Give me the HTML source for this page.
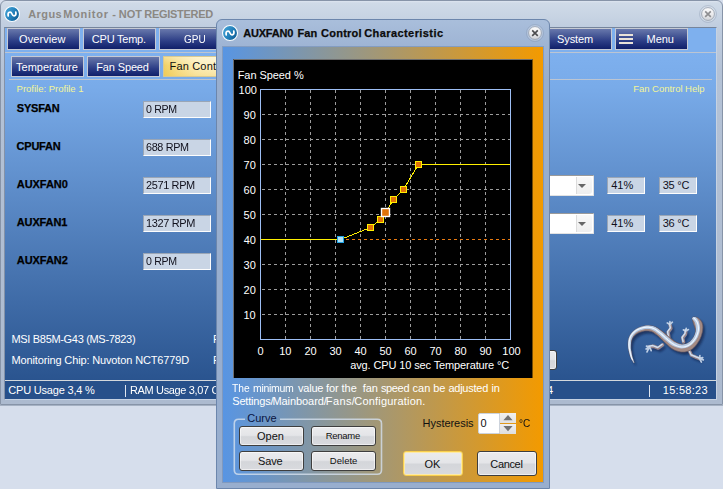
<!DOCTYPE html>
<html><head><meta charset="utf-8"><title>Argus Monitor</title>
<style>
html,body{margin:0;padding:0}
body{width:723px;height:489px;position:relative;overflow:hidden;background:#d6deec;font-family:'Liberation Sans', sans-serif;font-size:11px}
div,span,svg,i,b{position:absolute;box-sizing:content-box}
.t{white-space:nowrap;display:block}
#main{left:0;top:0;width:721px;height:403px;border:1px solid #8794a8;border-radius:6px 6px 0 0;box-shadow:0 1px 0 rgba(125,140,162,.55);background:linear-gradient(to bottom,#dde5ef 0,#cfdae7 2px,#c9d5e4 13px,#c0cddf 26px,#b4c2d6 70px,#acbacf 100%)}
#mc{left:5px;top:28px;width:711px;height:371px;background:linear-gradient(to bottom,#7eb0ee 0,#7eb0ee 25px,#79abe9 59px,#2a548f 352px,#27508a 371px);overflow:hidden}
.nb{border:1px solid #c6cad4;background:linear-gradient(to bottom,#6878ac 0,#4a5b98 30%,#2c3d86 60%,#101f6a 100%)}
.nb.sel{border-color:#d8c992;background:linear-gradient(to bottom,rgba(255,255,255,.3) 0,rgba(255,255,255,0) 45%,rgba(236,190,60,.28) 100%),linear-gradient(to right,#f1d063 0,#f7df8c 18%,#fceeb8 45%,#fdf2c8 75%,#fdf0c4 100%)}
.hl{height:1px;background:#bcc5d2}
.vb{background:#c9d5e5;border:1px solid;border-color:#9aa6b6 #fdfdfd #fdfdfd #9aa6b6}
.cb{background:#fff;border:1px solid #e2e2e2;border-top-color:#9a9a9a;border-radius:1px}
.cb i{right:1px;top:1px;width:15px;height:17px;background:linear-gradient(#f8f8f8,#eeeeee);border-left:1px solid #dcdcdc;border-radius:0 3px 3px 0}
.cb b{right:6.6px;top:7.8px;width:0;height:0;border:4.1px solid transparent;border-top:4.4px solid #666;border-bottom:0}
.vs{width:1px;background:#dfe6f0}
#dlg{left:216px;top:19px;width:332px;height:468px;border:1px solid #6c86ac;border-radius:6px 6px 0 0;background:linear-gradient(to bottom,#a9bedb 0,#9eb4d4 27px,#98aece 60px,#98aece 100%)}
#dc{left:223px;top:47px;width:320px;height:435px;box-shadow:0 0 0 1px rgba(110,136,176,.55);background:linear-gradient(to right,#5895e3 0,#f39a00 100%)}
.wb{border:1px solid #3e3e3e;border-radius:3px;background:linear-gradient(to bottom,#ebebed 0,#e4e5e8 46%,#d4d6da 54%,#d9dade 100%);box-shadow:inset 0 0 0 1px rgba(255,255,255,.55)}
.gb{border:1px solid rgba(215,222,230,.85);border-radius:4px}
.ico{display:block}
</style></head><body>
<div id="main"></div>
<div style="left:4px;top:27px;width:711px;height:371px;border:1px solid;border-color:#76859c #c6d2e2 #c6d2e2 #8492a8"></div>
<div id="mc"></div>
<div class="hl" style="left:5px;top:52px;width:711px"></div>
<div class="hl" style="left:9px;top:79px;width:703px"></div>
<div class="hl" style="left:5px;top:380px;width:711px;background:#d4d8dc"></div>
<div style="left:5px;top:381px;width:711px;height:18px;background:#27508a"></div>
<div class="vs" style="left:125px;top:385px;height:12px"></div>
<div class="vs" style="left:649px;top:385px;height:12px"></div>
<div class="nb" style="left:7px;top:28px;width:71px;height:20px"></div>
<div class="nb" style="left:83px;top:28px;width:71px;height:20px"></div>
<div class="nb" style="left:159px;top:28px;width:71px;height:20px"></div>
<div class="nb" style="left:235px;top:28px;width:71px;height:20px"></div>
<div class="nb" style="left:311px;top:28px;width:71px;height:20px"></div>
<div class="nb" style="left:387px;top:28px;width:71px;height:20px"></div>
<div class="nb" style="left:463px;top:28px;width:71px;height:20px"></div>
<div class="nb" style="left:539px;top:28px;width:71px;height:20px"></div>
<div class="nb" style="left:615px;top:28px;width:71px;height:20px"></div>
<div class="nb" style="left:11px;top:56px;width:71px;height:19px"></div>
<div class="nb" style="left:87px;top:56px;width:71px;height:19px"></div>
<div class="nb sel" style="left:163px;top:56px;width:71px;height:19px"></div>
<div style="left:619px;top:34px;width:14px;height:2px;background:#e9e2d8;box-shadow:0 4px 0 #e9e2d8,0 8px 0 #e9e2d8"></div>
<div class="vb" style="left:143px;top:101px;width:66px;height:15px"></div>
<div class="vb" style="left:143px;top:139px;width:66px;height:15px"></div>
<div class="vb" style="left:143px;top:177px;width:66px;height:15px"></div>
<div class="vb" style="left:143px;top:215px;width:66px;height:15px"></div>
<div class="vb" style="left:143px;top:253px;width:66px;height:15px"></div>
<div class="vb" style="left:607px;top:177px;width:36px;height:15px"></div>
<div class="vb" style="left:659px;top:177px;width:36px;height:15px"></div>
<div class="vb" style="left:607px;top:215px;width:36px;height:15px"></div>
<div class="vb" style="left:659px;top:215px;width:36px;height:15px"></div>
<div class="cb" style="left:500px;top:175px;width:92px;height:19px"><i></i><b></b></div>
<div class="cb" style="left:500px;top:213px;width:92px;height:19px"><i></i><b></b></div>
<div class="wb" style="left:520px;top:350px;width:35px;height:18px"></div>
<svg style="left:620px;top:306px" width="97" height="68" viewBox="620 306 97 68">
<defs><clipPath id="gc"><path d="M634.3 362.5 L634.0 361.8 L633.6 360.8 L633.2 359.6 L632.7 358.3 L632.3 356.7 L631.9 354.9 L631.5 352.7 L631.1 350.4 L630.8 348.1 L630.8 346.1 L630.9 344.3 L631.1 342.6 L631.4 341.0 L631.9 339.6 L632.5 338.3 L633.3 337.1 L634.2 336.0 L635.3 335.0 L636.4 334.1 L637.7 333.3 L639.1 332.6 L640.8 332.0 L642.5 331.5 L644.2 331.1 L645.8 330.9 L647.2 330.9 L648.5 331.0 L649.8 331.2 L651.1 331.5 L652.3 331.9 L653.5 332.6 L654.7 333.4 L656.0 334.4 L657.4 335.5 L658.7 336.6 L659.9 337.7 L661.1 338.8 L662.3 340.1 L663.7 341.4 L665.0 342.7 L666.4 344.0 L667.8 345.3 L669.3 346.7 L671.0 348.1 L672.9 349.2 L674.8 350.2 L676.7 350.9 L678.7 351.5 L680.8 352.0 L682.9 352.1 L685.0 352.0 L687.0 351.5 L688.9 350.9 L690.6 350.0 L692.3 349.0 L693.8 347.7 L695.2 346.3 L696.5 344.7 L697.6 343.1 L698.6 341.6 L699.6 339.9 L700.4 338.2 L701.1 336.4 L701.7 334.6 L702.2 332.8 L702.6 330.9 L702.8 329.1 L702.9 327.3 L702.8 325.7 L702.5 324.1 L702.0 322.5 L701.2 321.1 L700.4 319.9 L699.5 319.0 L698.5 318.2 L697.3 317.5 L696.0 317.2 L694.7 317.0 L693.7 317.0 L693.1 317.0 L692.0 318.4 L692.2 319.1 L692.5 320.0 L692.8 321.0 L693.0 321.9 L693.2 322.7 L693.4 323.5 L693.7 324.3 L694.0 325.0 L694.2 325.6 L694.5 326.3 L694.7 327.2 L695.1 328.2 L695.3 329.3 L695.5 330.5 L695.5 331.6 L695.3 332.8 L694.9 334.1 L694.4 335.5 L693.8 336.8 L693.0 338.1 L692.2 339.2 L691.2 340.3 L690.2 341.4 L689.2 342.2 L688.2 342.8 L687.2 343.4 L686.1 343.8 L685.1 344.1 L684.0 344.3 L683.0 344.3 L681.9 344.2 L680.7 343.9 L679.3 343.5 L677.9 343.0 L676.6 342.4 L675.3 341.7 L674.0 340.8 L672.6 339.7 L671.1 338.6 L669.6 337.4 L668.3 336.3 L667.0 335.2 L665.6 334.0 L664.2 332.8 L662.7 331.6 L661.2 330.5 L659.7 329.4 L658.0 328.3 L656.2 327.3 L654.4 326.5 L652.5 326.0 L650.7 325.7 L648.9 325.5 L647.0 325.6 L645.1 325.8 L643.1 326.2 L641.1 326.8 L639.1 327.6 L637.1 328.5 L635.4 329.5 L633.8 330.7 L632.5 332.1 L631.2 333.5 L630.2 335.1 L629.4 336.8 L628.7 338.5 L628.3 340.3 L628.1 342.2 L628.0 344.2 L628.1 346.2 L628.3 348.4 L628.8 350.8 L629.4 353.2 L630.0 355.4 L630.6 357.2 L631.2 358.8 L632.0 360.2 L632.7 361.3 L633.3 362.2 L633.7 362.9Z"/></clipPath>
<filter id="gb" x="-20%" y="-20%" width="140%" height="140%"><feGaussianBlur stdDeviation="1.2"/></filter></defs>
<g transform="translate(2,2.6)" opacity=".6" filter="url(#gb)"><path d="M634.3 362.5 L634.0 361.8 L633.6 360.8 L633.2 359.6 L632.7 358.3 L632.3 356.7 L631.9 354.9 L631.5 352.7 L631.1 350.4 L630.8 348.1 L630.8 346.1 L630.9 344.3 L631.1 342.6 L631.4 341.0 L631.9 339.6 L632.5 338.3 L633.3 337.1 L634.2 336.0 L635.3 335.0 L636.4 334.1 L637.7 333.3 L639.1 332.6 L640.8 332.0 L642.5 331.5 L644.2 331.1 L645.8 330.9 L647.2 330.9 L648.5 331.0 L649.8 331.2 L651.1 331.5 L652.3 331.9 L653.5 332.6 L654.7 333.4 L656.0 334.4 L657.4 335.5 L658.7 336.6 L659.9 337.7 L661.1 338.8 L662.3 340.1 L663.7 341.4 L665.0 342.7 L666.4 344.0 L667.8 345.3 L669.3 346.7 L671.0 348.1 L672.9 349.2 L674.8 350.2 L676.7 350.9 L678.7 351.5 L680.8 352.0 L682.9 352.1 L685.0 352.0 L687.0 351.5 L688.9 350.9 L690.6 350.0 L692.3 349.0 L693.8 347.7 L695.2 346.3 L696.5 344.7 L697.6 343.1 L698.6 341.6 L699.6 339.9 L700.4 338.2 L701.1 336.4 L701.7 334.6 L702.2 332.8 L702.6 330.9 L702.8 329.1 L702.9 327.3 L702.8 325.7 L702.5 324.1 L702.0 322.5 L701.2 321.1 L700.4 319.9 L699.5 319.0 L698.5 318.2 L697.3 317.5 L696.0 317.2 L694.7 317.0 L693.7 317.0 L693.1 317.0 L692.0 318.4 L692.2 319.1 L692.5 320.0 L692.8 321.0 L693.0 321.9 L693.2 322.7 L693.4 323.5 L693.7 324.3 L694.0 325.0 L694.2 325.6 L694.5 326.3 L694.7 327.2 L695.1 328.2 L695.3 329.3 L695.5 330.5 L695.5 331.6 L695.3 332.8 L694.9 334.1 L694.4 335.5 L693.8 336.8 L693.0 338.1 L692.2 339.2 L691.2 340.3 L690.2 341.4 L689.2 342.2 L688.2 342.8 L687.2 343.4 L686.1 343.8 L685.1 344.1 L684.0 344.3 L683.0 344.3 L681.9 344.2 L680.7 343.9 L679.3 343.5 L677.9 343.0 L676.6 342.4 L675.3 341.7 L674.0 340.8 L672.6 339.7 L671.1 338.6 L669.6 337.4 L668.3 336.3 L667.0 335.2 L665.6 334.0 L664.2 332.8 L662.7 331.6 L661.2 330.5 L659.7 329.4 L658.0 328.3 L656.2 327.3 L654.4 326.5 L652.5 326.0 L650.7 325.7 L648.9 325.5 L647.0 325.6 L645.1 325.8 L643.1 326.2 L641.1 326.8 L639.1 327.6 L637.1 328.5 L635.4 329.5 L633.8 330.7 L632.5 332.1 L631.2 333.5 L630.2 335.1 L629.4 336.8 L628.7 338.5 L628.3 340.3 L628.1 342.2 L628.0 344.2 L628.1 346.2 L628.3 348.4 L628.8 350.8 L629.4 353.2 L630.0 355.4 L630.6 357.2 L631.2 358.8 L632.0 360.2 L632.7 361.3 L633.3 362.2 L633.7 362.9Z" fill="#08193a"/><path d="M669.0 337.9 L668.1 332.2 L670.9 328.4 L669.9 324.3 M683.6 342.1 L682.6 337.9 L685.5 334.1 L685.9 330.9 M662.6 344.9 L658.2 348.1 L653.3 346.2 L649.5 346.8 M689.3 350.6 L691.5 355.3 L696.3 357.4 L699.5 358.6" fill="none" stroke="#08193a" stroke-width="2.4" stroke-linecap="round" stroke-linejoin="round"/></g>
<path d="M669.0 337.9 L668.1 332.2 L670.9 328.4 L669.9 324.3 M683.6 342.1 L682.6 337.9 L685.5 334.1 L685.9 330.9 M662.6 344.9 L658.2 348.1 L653.3 346.2 L649.5 346.8 M689.3 350.6 L691.5 355.3 L696.3 357.4 L699.5 358.6" fill="none" stroke="#98858a" stroke-width="3.4" stroke-linecap="round" stroke-linejoin="round"/>
<path d="M669.9 324.3 L667.3 323.0 M669.9 324.3 L669.9 321.7 M669.9 324.3 L672.4 322.2 M685.9 330.9 L683.4 329.9 M685.9 330.9 L686.2 328.4 M685.9 330.9 L688.4 329.6 M649.5 346.8 L646.5 346.2 M649.5 346.8 L646.1 349.0 M649.5 346.8 L647.0 351.9 M649.5 346.8 L651.2 350.6 M699.5 358.6 L702.7 357.6 M699.5 358.6 L703.3 359.9 M699.5 358.6 L701.4 362.1 M699.5 358.6 L699.9 355.7" fill="none" stroke="#bccde4" stroke-width="1.7" stroke-linecap="round"/>
<path d="M669.0 337.9 L668.1 332.2 L670.9 328.4 L669.9 324.3 M683.6 342.1 L682.6 337.9 L685.5 334.1 L685.9 330.9 M662.6 344.9 L658.2 348.1 L653.3 346.2 L649.5 346.8 M689.3 350.6 L691.5 355.3 L696.3 357.4 L699.5 358.6" fill="none" stroke="#cfdef0" stroke-width="1.5" stroke-linecap="round" stroke-linejoin="round" transform="translate(-.5,-.6)"/>
<path d="M634.3 362.5 L634.0 361.8 L633.6 360.8 L633.2 359.6 L632.7 358.3 L632.3 356.7 L631.9 354.9 L631.5 352.7 L631.1 350.4 L630.8 348.1 L630.8 346.1 L630.9 344.3 L631.1 342.6 L631.4 341.0 L631.9 339.6 L632.5 338.3 L633.3 337.1 L634.2 336.0 L635.3 335.0 L636.4 334.1 L637.7 333.3 L639.1 332.6 L640.8 332.0 L642.5 331.5 L644.2 331.1 L645.8 330.9 L647.2 330.9 L648.5 331.0 L649.8 331.2 L651.1 331.5 L652.3 331.9 L653.5 332.6 L654.7 333.4 L656.0 334.4 L657.4 335.5 L658.7 336.6 L659.9 337.7 L661.1 338.8 L662.3 340.1 L663.7 341.4 L665.0 342.7 L666.4 344.0 L667.8 345.3 L669.3 346.7 L671.0 348.1 L672.9 349.2 L674.8 350.2 L676.7 350.9 L678.7 351.5 L680.8 352.0 L682.9 352.1 L685.0 352.0 L687.0 351.5 L688.9 350.9 L690.6 350.0 L692.3 349.0 L693.8 347.7 L695.2 346.3 L696.5 344.7 L697.6 343.1 L698.6 341.6 L699.6 339.9 L700.4 338.2 L701.1 336.4 L701.7 334.6 L702.2 332.8 L702.6 330.9 L702.8 329.1 L702.9 327.3 L702.8 325.7 L702.5 324.1 L702.0 322.5 L701.2 321.1 L700.4 319.9 L699.5 319.0 L698.5 318.2 L697.3 317.5 L696.0 317.2 L694.7 317.0 L693.7 317.0 L693.1 317.0 L692.0 318.4 L692.2 319.1 L692.5 320.0 L692.8 321.0 L693.0 321.9 L693.2 322.7 L693.4 323.5 L693.7 324.3 L694.0 325.0 L694.2 325.6 L694.5 326.3 L694.7 327.2 L695.1 328.2 L695.3 329.3 L695.5 330.5 L695.5 331.6 L695.3 332.8 L694.9 334.1 L694.4 335.5 L693.8 336.8 L693.0 338.1 L692.2 339.2 L691.2 340.3 L690.2 341.4 L689.2 342.2 L688.2 342.8 L687.2 343.4 L686.1 343.8 L685.1 344.1 L684.0 344.3 L683.0 344.3 L681.9 344.2 L680.7 343.9 L679.3 343.5 L677.9 343.0 L676.6 342.4 L675.3 341.7 L674.0 340.8 L672.6 339.7 L671.1 338.6 L669.6 337.4 L668.3 336.3 L667.0 335.2 L665.6 334.0 L664.2 332.8 L662.7 331.6 L661.2 330.5 L659.7 329.4 L658.0 328.3 L656.2 327.3 L654.4 326.5 L652.5 326.0 L650.7 325.7 L648.9 325.5 L647.0 325.6 L645.1 325.8 L643.1 326.2 L641.1 326.8 L639.1 327.6 L637.1 328.5 L635.4 329.5 L633.8 330.7 L632.5 332.1 L631.2 333.5 L630.2 335.1 L629.4 336.8 L628.7 338.5 L628.3 340.3 L628.1 342.2 L628.0 344.2 L628.1 346.2 L628.3 348.4 L628.8 350.8 L629.4 353.2 L630.0 355.4 L630.6 357.2 L631.2 358.8 L632.0 360.2 L632.7 361.3 L633.3 362.2 L633.7 362.9Z" fill="#a38a84" stroke="#625660" stroke-width=".7"/>
<g clip-path="url(#gc)"><path d="M633.9 362.5 L633.5 361.8 L633.0 360.8 L632.4 359.6 L631.7 358.2 L631.2 356.6 L630.7 354.6 L630.1 352.4 L629.6 350.0 L629.2 347.7 L629.0 345.5 L629.0 343.6 L629.1 341.7 L629.4 339.9 L629.8 338.3 L630.4 336.7 L631.2 335.2 L632.1 333.8 L633.3 332.6 L634.5 331.4 L635.9 330.4 L637.4 329.5 L639.2 328.7 L641.1 328.0 L642.9 327.5 L644.7 327.1 L646.3 327.0 L647.9 327.0 L649.4 327.1 L650.9 327.4 L652.5 327.9 L654.0 328.6 L655.4 329.4 L656.9 330.4 L658.3 331.5 L659.7 332.6 L661.1 333.7 L662.4 334.9 L663.6 336.1 L664.9 337.3 L666.3 338.4 L667.7 339.6 L669.1 340.8 L670.5 342.0 L672.0 343.1 L673.5 344.0 L675.1 344.7 L676.8 345.4 L678.5 345.9 L680.2 346.2 L681.8 346.4 L683.3 346.3 L684.9 346.0 L686.3 345.6 L687.8 344.9 L689.1 344.2 L690.4 343.3 L691.6 342.2 L692.8 340.9 L693.9 339.6 L694.8 338.3 L695.7 336.8 L696.4 335.3 L697.0 333.7 L697.5 332.1 L697.9 330.6 L698.0 329.0 L698.0 327.5 L697.8 325.9 L697.5 324.5 L697.2 323.2 L696.9 322.1 L696.4 321.1 L695.8 320.2 L695.3 319.5 L694.8 318.8 L694.2 318.3 L693.6 317.9 L693.1 317.6 L692.6 317.4 L692.2 317.2" fill="none" stroke="#b6cae4" stroke-width="4" stroke-linecap="round" stroke-linejoin="round"/>
<path d="M632.4 359.6 L631.8 358.2 L631.2 356.6 L630.7 354.7 L630.2 352.5 L629.7 350.1 L629.3 347.8 L629.1 345.6 L629.1 343.7 L629.2 341.8 L629.5 340.0 L629.9 338.4 L630.5 336.8 L631.3 335.3 L632.3 334.0 L633.4 332.7 L634.7 331.5 L636.0 330.5 L637.6 329.6 L639.4 328.8 L641.2 328.2 L643.1 327.6 L644.9 327.3 L646.5 327.1 L648.1 327.1 L649.6 327.3 L651.2 327.6 L652.7 328.1 L654.2 328.7 L655.7 329.6 L657.2 330.7 L658.6 331.8 L660.0 332.9 L661.4 334.0 L662.7 335.2 L664.0 336.4 L665.3 337.6 L666.7 338.8 L668.1 340.1 L669.5 341.3 L671.0 342.5 L672.5 343.6 L674.0 344.6 L675.6 345.3 L677.3 346.0 L679.0 346.5 L680.7 346.9 L682.3 347.0 L683.8 346.9 L685.4 346.6 L686.8 346.1 L688.2 345.5 L689.6 344.7 L690.8 343.7 L692.0 342.6 L693.2 341.3 L694.2 340.0 L695.2 338.6 L696.0 337.2 L696.7 335.6 L697.4 334.0 L697.9 332.5 L698.2 331.0 L698.4 329.5 L698.4 328.0 L698.3 326.6 L698.1 325.2 L697.8 324.0 L697.4 322.8 L697.0 321.8 L696.4 320.9 L695.8 320.0 L695.2 319.3 L694.5 318.5 L693.8 318.1" fill="none" stroke="#eef5fd" stroke-width="1.2" stroke-linecap="round" stroke-linejoin="round"/></g>
</svg>
<span class="t" id="t0" style="left:28.15px;top:8px;font-size:11px;line-height:13px;font-weight:bold;color:#8b8883;letter-spacing:0.438px;">Argus</span>
<span class="t" id="t1" style="left:63.25px;top:8px;font-size:11px;line-height:13px;font-weight:bold;color:#8b8883;letter-spacing:0.733px;">Monitor</span>
<span class="t" id="t2" style="left:112.32px;top:8px;font-size:11px;line-height:13px;font-weight:bold;color:#8b8883;letter-spacing:0.000px;">-</span>
<span class="t" id="t3" style="left:118.75px;top:8px;font-size:11px;line-height:13px;font-weight:bold;color:#8b8883;letter-spacing:0.000px;">NOT</span>
<span class="t" id="t4" style="left:144.25px;top:8px;font-size:11px;line-height:13px;font-weight:bold;color:#8b8883;letter-spacing:-0.294px;">REGISTERED</span>
<span class="t" id="t5" style="left:19.00px;top:33px;font-size:11px;line-height:13px;font-weight:normal;color:#fff;letter-spacing:0.093px;">Overview</span>
<span class="t" id="t6" style="left:91.80px;top:33px;font-size:11px;line-height:13px;font-weight:normal;color:#fff;letter-spacing:-0.225px;">CPU Temp.</span>
<span class="t" id="t7" style="left:183.58px;top:33px;font-size:11px;line-height:13px;font-weight:normal;color:#fff;letter-spacing:0.000px;transform:scaleX(0.9120);transform-origin:0 50%;">GPU</span>
<span class="t" id="t8" style="left:557.00px;top:33px;font-size:11px;line-height:13px;font-weight:normal;color:#fff;letter-spacing:-0.100px;">System</span>
<span class="t" id="t9" style="left:646.50px;top:33px;font-size:11px;line-height:13px;font-weight:normal;color:#fff;letter-spacing:-0.017px;">Menu</span>
<span class="t" id="t10" style="left:16.05px;top:61px;font-size:11px;line-height:13px;font-weight:normal;color:#fff;letter-spacing:0.000px;">Temperature</span>
<span class="t" id="t11" style="left:96.30px;top:61px;font-size:11px;line-height:13px;font-weight:normal;color:#fff;letter-spacing:-0.144px;">Fan Speed</span>
<span class="t" id="t12" style="left:169.60px;top:60px;font-size:11px;line-height:13px;font-weight:normal;color:#101010;letter-spacing:0.165px;">Fan Control</span>
<span class="t" id="t13" style="left:16.55px;top:83px;font-size:9.5px;line-height:11px;font-weight:normal;color:#f2f596;letter-spacing:-0.003px;">Profile: Profile 1</span>
<span class="t" id="t14" style="left:633.25px;top:83px;font-size:9.5px;line-height:11px;font-weight:normal;color:#f2f596;letter-spacing:-0.037px;">Fan Control Help</span>
<span class="t" id="t15" style="left:16.75px;top:102px;font-size:11px;line-height:13px;font-weight:bold;color:#000;letter-spacing:-0.200px;-webkit-text-stroke:.25px #000;">SYSFAN</span>
<span class="t" id="t16" style="left:16.50px;top:140px;font-size:11px;line-height:13px;font-weight:bold;color:#000;letter-spacing:-0.200px;-webkit-text-stroke:.25px #000;">CPUFAN</span>
<span class="t" id="t17" style="left:16.75px;top:178px;font-size:11px;line-height:13px;font-weight:bold;color:#000;letter-spacing:-0.042px;-webkit-text-stroke:.25px #000;">AUXFAN0</span>
<span class="t" id="t18" style="left:16.75px;top:216px;font-size:11px;line-height:13px;font-weight:bold;color:#000;letter-spacing:-0.125px;-webkit-text-stroke:.25px #000;">AUXFAN1</span>
<span class="t" id="t19" style="left:16.75px;top:254px;font-size:11px;line-height:13px;font-weight:bold;color:#000;letter-spacing:-0.042px;-webkit-text-stroke:.25px #000;">AUXFAN2</span>
<span class="t" id="t20" style="left:146.12px;top:103px;font-size:11px;line-height:13px;font-weight:normal;color:#10101c;letter-spacing:-0.350px;transform:scaleX(0.9627);transform-origin:0 50%;">0 RPM</span>
<span class="t" id="t21" style="left:146.11px;top:141px;font-size:11px;line-height:13px;font-weight:normal;color:#10101c;letter-spacing:-0.350px;transform:scaleX(0.9835);transform-origin:0 50%;">688 RPM</span>
<span class="t" id="t22" style="left:146.10px;top:179px;font-size:11px;line-height:13px;font-weight:normal;color:#10101c;letter-spacing:-0.350px;transform:scaleX(0.9927);transform-origin:0 50%;">2571 RPM</span>
<span class="t" id="t23" style="left:145.85px;top:217px;font-size:11px;line-height:13px;font-weight:normal;color:#10101c;letter-spacing:-0.350px;transform:scaleX(0.9979);transform-origin:0 50%;">1327 RPM</span>
<span class="t" id="t24" style="left:146.12px;top:255px;font-size:11px;line-height:13px;font-weight:normal;color:#10101c;letter-spacing:-0.350px;transform:scaleX(0.9627);transform-origin:0 50%;">0 RPM</span>
<span class="t" id="t25" style="left:611.25px;top:179px;font-size:11px;line-height:13px;font-weight:normal;color:#10101c;letter-spacing:0.000px;">41%</span>
<span class="t" id="t26" style="left:662.70px;top:179px;font-size:11px;line-height:13px;font-weight:normal;color:#10101c;letter-spacing:-0.238px;">35 °C</span>
<span class="t" id="t27" style="left:611.25px;top:217px;font-size:11px;line-height:13px;font-weight:normal;color:#10101c;letter-spacing:0.000px;">41%</span>
<span class="t" id="t28" style="left:662.70px;top:217px;font-size:11px;line-height:13px;font-weight:normal;color:#10101c;letter-spacing:-0.238px;">36 °C</span>
<span class="t" id="t29" style="left:11.50px;top:333px;font-size:11px;line-height:13px;font-weight:normal;color:#fff;letter-spacing:-0.321px;">MSI B85M-G43 (MS-7823)</span>
<span class="t" id="t30" style="left:11.50px;top:354px;font-size:11px;line-height:13px;font-weight:normal;color:#fff;letter-spacing:-0.142px;">Monitoring Chip: Nuvoton NCT6779D</span>
<span class="t" id="t31" style="left:213.00px;top:333px;font-size:11px;line-height:13px;font-weight:normal;color:#fff;letter-spacing:0.025px;">Fan Control</span>
<span class="t" id="t32" style="left:213.00px;top:354px;font-size:11px;line-height:13px;font-weight:normal;color:#fff;letter-spacing:0.025px;">Fan Control</span>
<span class="t" id="t33" style="left:8.30px;top:384px;font-size:11px;line-height:13px;font-weight:normal;color:#fff;letter-spacing:-0.193px;">CPU Usage 3,4 %</span>
<span class="t" id="t34" style="left:129.50px;top:384px;font-size:11px;line-height:13px;font-weight:normal;color:#fff;letter-spacing:-0.350px;transform:scaleX(0.9984);transform-origin:0 50%;">RAM Usage 3,07 GB</span>
<span class="t" id="t35" style="left:662.85px;top:384px;font-size:11px;line-height:13px;font-weight:normal;color:#fff;letter-spacing:0.271px;">15:58:23</span>
<span class="t" id="t36" style="left:547.00px;top:384px;font-size:11px;line-height:13px;font-weight:normal;color:#fff;letter-spacing:0.000px;">4</span>
<svg class="ico" style="left:3px;top:4.6px" width="18" height="18" viewBox="0 0 18 18"><defs><linearGradient id="g1" x1="0" y1="0.2" x2="1" y2="0.8"><stop offset="0" stop-color="#46a4d6"/><stop offset=".5" stop-color="#2583bd"/><stop offset="1" stop-color="#0c5890"/></linearGradient></defs><circle cx="9" cy="9" r="7.5" fill="url(#g1)" stroke="#fbfdff" stroke-width="1.1"/><path d="M5.2 10.8C4.4 6.8 7.8 6 9 9S13.6 11.2 12.8 7.2" fill="none" stroke="#fff" stroke-width="1.75" stroke-linecap="round"/></svg>
<svg class="ico" style="left:698px;top:4.3px" width="20" height="20" viewBox="0 0 20 20"><defs><linearGradient id="c1" x1="0" y1="0" x2="0" y2="1"><stop offset="0" stop-color="#fdfdfd"/><stop offset=".5" stop-color="#ececee"/><stop offset="1" stop-color="#d2d4d8"/></linearGradient></defs><circle cx="10" cy="10" r="8.4" fill="#fff" fill-opacity=".2" stroke="#5c6f8c" stroke-opacity=".28" stroke-width="1"/><circle cx="10" cy="10" r="6.4" fill="url(#c1)" stroke="#9aa3b0" stroke-width=".9"/><path d="M7.2 7.4L12.8 12.8M12.8 7.4L7.2 12.8" stroke="#8e8e90" stroke-width="1.6" fill="none"/></svg>
<div id="dlg"></div>
<div id="dc"></div>
<svg class="ico" style="left:221px;top:23.9px" width="18" height="18" viewBox="0 0 18 18"><defs><linearGradient id="g2" x1="0" y1="0.2" x2="1" y2="0.8"><stop offset="0" stop-color="#46a4d6"/><stop offset=".5" stop-color="#2583bd"/><stop offset="1" stop-color="#0c5890"/></linearGradient></defs><circle cx="9" cy="9" r="7.5" fill="url(#g2)" stroke="#fbfdff" stroke-width="1.1"/><path d="M5.2 10.8C4.4 6.8 7.8 6 9 9S13.6 11.2 12.8 7.2" fill="none" stroke="#fff" stroke-width="1.75" stroke-linecap="round"/></svg>
<svg class="ico" style="left:525px;top:23.3px" width="20" height="20" viewBox="0 0 20 20"><defs><linearGradient id="c2" x1="0" y1="0" x2="0" y2="1"><stop offset="0" stop-color="#fdfdfd"/><stop offset=".5" stop-color="#ececee"/><stop offset="1" stop-color="#d2d4d8"/></linearGradient></defs><circle cx="10" cy="10" r="8.4" fill="#fff" fill-opacity=".2" stroke="#5c6f8c" stroke-opacity=".28" stroke-width="1"/><circle cx="10" cy="10" r="6.4" fill="url(#c2)" stroke="#9aa3b0" stroke-width=".9"/><path d="M7.2 7.4L12.8 12.8M12.8 7.4L7.2 12.8" stroke="#4c4c4e" stroke-width="1.6" fill="none"/></svg>
<svg style="position:absolute;left:233px;top:59px" width="300" height="320" viewBox="233 59 300 320">
<rect x="233" y="59" width="299.5" height="319" fill="#000"/>
<path d="M233.5 378V59.5H532.5" fill="none" stroke="#6e6e6e" stroke-width="1"/>
<path d="M285.5 90V339 M310.5 90V339 M335.5 90V339 M360.5 90V339 M385.5 90V339 M410.5 90V339 M435.5 90V339 M460.5 90V339 M485.5 90V339 M262 114.5H510 M262 139.5H510 M262 164.5H510 M262 189.5H510 M262 214.5H510 M262 239.5H340 M262 264.5H510 M262 289.5H510 M262 314.5H510" fill="none" stroke="#9c9c9c" stroke-width="1" stroke-dasharray="3 3"/>
<path d="M346 239.5H510" fill="none" stroke="#e87a10" stroke-width="1" stroke-dasharray="3 3"/>
<rect x="260.5" y="89.5" width="250" height="250" fill="none" stroke="#9dbef4" stroke-width="1"/>
<path d="M261 239.5 L340.5 239.5 L370.5 227.5 L380.5 219.5 L385.5 212.5 L393.5 199.5 L403.5 189.5 L418.5 164.5 L510 164.5" fill="none" stroke="#fff000" stroke-width="1" shape-rendering="crispEdges"/>
<rect x="337.5" y="236.5" width="6" height="6" fill="#b4e2f4" stroke="#22a4e6" stroke-width="1"/>
<rect x="367.5" y="224.5" width="6" height="6" fill="#e07208" stroke="#fff000" stroke-width="1"/>
<rect x="377.5" y="216.5" width="6" height="6" fill="#e07208" stroke="#fff000" stroke-width="1"/>
<rect x="381.5" y="208.5" width="8" height="8" fill="#e07208" stroke="#ffffff" stroke-width="1.4"/>
<rect x="390.5" y="196.5" width="6" height="6" fill="#e07208" stroke="#fff000" stroke-width="1"/>
<rect x="400.5" y="186.5" width="6" height="6" fill="#e07208" stroke="#fff000" stroke-width="1"/>
<rect x="415.5" y="161.5" width="6" height="6" fill="#e07208" stroke="#fff000" stroke-width="1"/>
</svg>
<svg style="left:230px;top:414px" width="160" height="66" viewBox="230 414 160 66"><path d="M245 419.2H238.6Q234.3 419.2 234.3 423.5V470Q234.3 474.3 238.6 474.3H377.2Q381.5 474.3 381.5 470V423.5Q381.5 419.2 377.2 419.2H280" fill="none" stroke="#d5e0ee" stroke-opacity=".8" stroke-width="1.6"/></svg>
<div class="wb" style="left:239px;top:426px;width:63px;height:18px"></div>
<div class="wb" style="left:311px;top:426px;width:63px;height:18px"></div>
<div class="wb" style="left:239px;top:451px;width:63px;height:18px"></div>
<div class="wb" style="left:311px;top:451px;width:63px;height:18px"></div>
<div class="wb" style="left:403px;top:451px;width:58px;height:23px;border-color:#f8cf4c;box-shadow:inset 0 0 0 1px #fdeaa8"></div>
<div class="wb" style="left:477px;top:451px;width:58px;height:23px"></div>
<div style="left:478px;top:413px;width:20px;height:19px;background:#fff;border:1px solid #cdd3dc;border-radius:2px 0 0 2px"></div>
<div style="left:500px;top:413px;width:16px;height:10px;background:linear-gradient(#f0f0f0,#e2e2e2)"></div>
<div style="left:500px;top:424px;width:16px;height:10px;background:linear-gradient(#efefef,#dedede)"></div>
<svg style="left:500px;top:413px" width="16" height="21" viewBox="0 0 16 21"><path d="M3.4 7.2L8 2L12.6 7.2Z M3.4 13L8 18.2L12.6 13Z" fill="#727272"/></svg>
<span class="t" id="t37" style="left:243.15px;top:27px;font-size:11px;line-height:13px;font-weight:bold;color:#0c0c0c;letter-spacing:-0.192px;-webkit-text-stroke:.25px #0c0c0c;">AUXFAN0</span>
<span class="t" id="t38" style="left:297.58px;top:27px;font-size:11px;line-height:13px;font-weight:bold;color:#0c0c0c;letter-spacing:0.000px;-webkit-text-stroke:.25px #0c0c0c;">Fan</span>
<span class="t" id="t39" style="left:321.10px;top:27px;font-size:11px;line-height:13px;font-weight:bold;color:#0c0c0c;letter-spacing:0.233px;-webkit-text-stroke:.25px #0c0c0c;">Control</span>
<span class="t" id="t40" style="left:364.20px;top:27px;font-size:11px;line-height:13px;font-weight:bold;color:#0c0c0c;letter-spacing:0.423px;-webkit-text-stroke:.25px #0c0c0c;">Characteristic</span>
<span class="t" id="t41" style="left:237.70px;top:69px;font-size:11px;line-height:13px;font-weight:normal;color:#fff;letter-spacing:-0.065px;">Fan Speed %</span>
<span class="t" id="t42" style="left:238.52px;top:84px;font-size:11px;line-height:13px;font-weight:normal;color:#fff;letter-spacing:0.000px;">100</span>
<span class="t" id="t43" style="left:243.58px;top:109px;font-size:11px;line-height:13px;font-weight:normal;color:#fff;letter-spacing:0.000px;">90</span>
<span class="t" id="t44" style="left:243.58px;top:134px;font-size:11px;line-height:13px;font-weight:normal;color:#fff;letter-spacing:0.000px;">80</span>
<span class="t" id="t45" style="left:243.58px;top:159px;font-size:11px;line-height:13px;font-weight:normal;color:#fff;letter-spacing:0.000px;">70</span>
<span class="t" id="t46" style="left:243.58px;top:184px;font-size:11px;line-height:13px;font-weight:normal;color:#fff;letter-spacing:0.000px;">60</span>
<span class="t" id="t47" style="left:243.58px;top:209px;font-size:11px;line-height:13px;font-weight:normal;color:#fff;letter-spacing:0.000px;">50</span>
<span class="t" id="t48" style="left:243.70px;top:234px;font-size:11px;line-height:13px;font-weight:normal;color:#fff;letter-spacing:0.000px;">40</span>
<span class="t" id="t49" style="left:243.58px;top:259px;font-size:11px;line-height:13px;font-weight:normal;color:#fff;letter-spacing:0.000px;">30</span>
<span class="t" id="t50" style="left:243.58px;top:284px;font-size:11px;line-height:13px;font-weight:normal;color:#fff;letter-spacing:0.000px;">20</span>
<span class="t" id="t51" style="left:243.45px;top:309px;font-size:11px;line-height:13px;font-weight:normal;color:#fff;letter-spacing:0.000px;">10</span>
<span class="t" id="t52" style="left:257.38px;top:345px;font-size:11px;line-height:13px;font-weight:normal;color:#fff;letter-spacing:0.000px;">0</span>
<span class="t" id="t53" style="left:279.25px;top:345px;font-size:11px;line-height:13px;font-weight:normal;color:#fff;letter-spacing:0.000px;">10</span>
<span class="t" id="t54" style="left:304.38px;top:345px;font-size:11px;line-height:13px;font-weight:normal;color:#fff;letter-spacing:0.000px;">20</span>
<span class="t" id="t55" style="left:329.38px;top:345px;font-size:11px;line-height:13px;font-weight:normal;color:#fff;letter-spacing:0.000px;">30</span>
<span class="t" id="t56" style="left:354.50px;top:345px;font-size:11px;line-height:13px;font-weight:normal;color:#fff;letter-spacing:0.000px;">40</span>
<span class="t" id="t57" style="left:379.38px;top:345px;font-size:11px;line-height:13px;font-weight:normal;color:#fff;letter-spacing:0.000px;">50</span>
<span class="t" id="t58" style="left:404.38px;top:345px;font-size:11px;line-height:13px;font-weight:normal;color:#fff;letter-spacing:0.000px;">60</span>
<span class="t" id="t59" style="left:429.38px;top:345px;font-size:11px;line-height:13px;font-weight:normal;color:#fff;letter-spacing:0.000px;">70</span>
<span class="t" id="t60" style="left:454.38px;top:345px;font-size:11px;line-height:13px;font-weight:normal;color:#fff;letter-spacing:0.000px;">80</span>
<span class="t" id="t61" style="left:479.38px;top:345px;font-size:11px;line-height:13px;font-weight:normal;color:#fff;letter-spacing:0.000px;">90</span>
<span class="t" id="t62" style="left:502.32px;top:345px;font-size:11px;line-height:13px;font-weight:normal;color:#fff;letter-spacing:0.000px;">100</span>
<span class="t" id="t63" style="left:350.20px;top:359px;font-size:11px;line-height:13px;font-weight:normal;color:#fff;letter-spacing:-0.119px;">avg. CPU 10 sec Temperature °C</span>
<span class="t" id="t64" style="left:232.06px;top:382px;font-size:11px;line-height:13px;font-weight:normal;color:#fff;letter-spacing:0.000px;transform:scaleX(0.9326);transform-origin:0 50%;">The</span>
<span class="t" id="t65" style="left:253.38px;top:382px;font-size:11px;line-height:13px;font-weight:normal;color:#fff;letter-spacing:-0.350px;transform:scaleX(0.9575);transform-origin:0 50%;">minimum</span>
<span class="t" id="t66" style="left:298.10px;top:382px;font-size:11px;line-height:13px;font-weight:normal;color:#fff;letter-spacing:-0.238px;">value</span>
<span class="t" id="t67" style="left:325.90px;top:382px;font-size:11px;line-height:13px;font-weight:normal;color:#fff;letter-spacing:0.000px;">for</span>
<span class="t" id="t68" style="left:341.55px;top:382px;font-size:11px;line-height:13px;font-weight:normal;color:#fff;letter-spacing:0.000px;">the</span>
<span class="t" id="t69" style="left:362.65px;top:382px;font-size:11px;line-height:13px;font-weight:normal;color:#fff;letter-spacing:0.000px;">fan</span>
<span class="t" id="t70" style="left:380.95px;top:382px;font-size:11px;line-height:13px;font-weight:normal;color:#fff;letter-spacing:-0.350px;">speed</span>
<span class="t" id="t71" style="left:412.55px;top:382px;font-size:11px;line-height:13px;font-weight:normal;color:#fff;letter-spacing:0.000px;">can</span>
<span class="t" id="t72" style="left:433.15px;top:382px;font-size:11px;line-height:13px;font-weight:normal;color:#fff;letter-spacing:0.000px;">be</span>
<span class="t" id="t73" style="left:448.40px;top:382px;font-size:11px;line-height:13px;font-weight:normal;color:#fff;letter-spacing:-0.243px;">adjusted</span>
<span class="t" id="t74" style="left:491.38px;top:382px;font-size:11px;line-height:13px;font-weight:normal;color:#fff;letter-spacing:0.000px;">in</span>
<span class="t" id="t75" style="left:232.30px;top:395px;font-size:11px;line-height:13px;font-weight:normal;color:#fff;letter-spacing:-0.194px;">Settings/</span>
<span class="t" id="t76" style="left:272.50px;top:395px;font-size:11px;line-height:13px;font-weight:normal;color:#fff;letter-spacing:-0.078px;">Mainboard/</span>
<span class="t" id="t77" style="left:325.80px;top:395px;font-size:11px;line-height:13px;font-weight:normal;color:#fff;letter-spacing:0.375px;">Fans/</span>
<span class="t" id="t78" style="left:354.30px;top:395px;font-size:11px;line-height:13px;font-weight:normal;color:#fff;letter-spacing:0.200px;">Configuration.</span>
<span class="t" id="t79" style="left:247.20px;top:412px;font-size:11px;line-height:13px;font-weight:normal;color:#0a1440;letter-spacing:0.000px;">Curve</span>
<span class="t" id="t80" style="left:257.00px;top:430px;font-size:11px;line-height:13px;font-weight:normal;color:#111;letter-spacing:-0.017px;">Open</span>
<span class="t" id="t81" style="left:258.10px;top:455px;font-size:11px;line-height:13px;font-weight:normal;color:#111;letter-spacing:-0.200px;">Save</span>
<span class="t" id="t82" style="left:325.65px;top:430px;font-size:9.5px;line-height:11px;font-weight:normal;color:#111;letter-spacing:-0.270px;">Rename</span>
<span class="t" id="t83" style="left:329.85px;top:455px;font-size:9.5px;line-height:11px;font-weight:normal;color:#111;letter-spacing:0.010px;">Delete</span>
<span class="t" id="t84" style="left:422.60px;top:417px;font-size:11px;line-height:13px;font-weight:normal;color:#111;letter-spacing:-0.044px;">Hysteresis</span>
<span class="t" id="t85" style="left:480.48px;top:417px;font-size:11px;line-height:13px;font-weight:normal;color:#111;letter-spacing:0.000px;">0</span>
<span class="t" id="t86" style="left:519.00px;top:417px;font-size:11px;line-height:13px;font-weight:normal;color:#111;letter-spacing:0.000px;transform:scaleX(0.9173);transform-origin:0 50%;">°C</span>
<span class="t" id="t87" style="left:424.52px;top:458px;font-size:11px;line-height:13px;font-weight:normal;color:#111;letter-spacing:0.000px;">OK</span>
<span class="t" id="t88" style="left:490.30px;top:458px;font-size:11px;line-height:13px;font-weight:normal;color:#111;letter-spacing:-0.340px;">Cancel</span>
</body></html>
